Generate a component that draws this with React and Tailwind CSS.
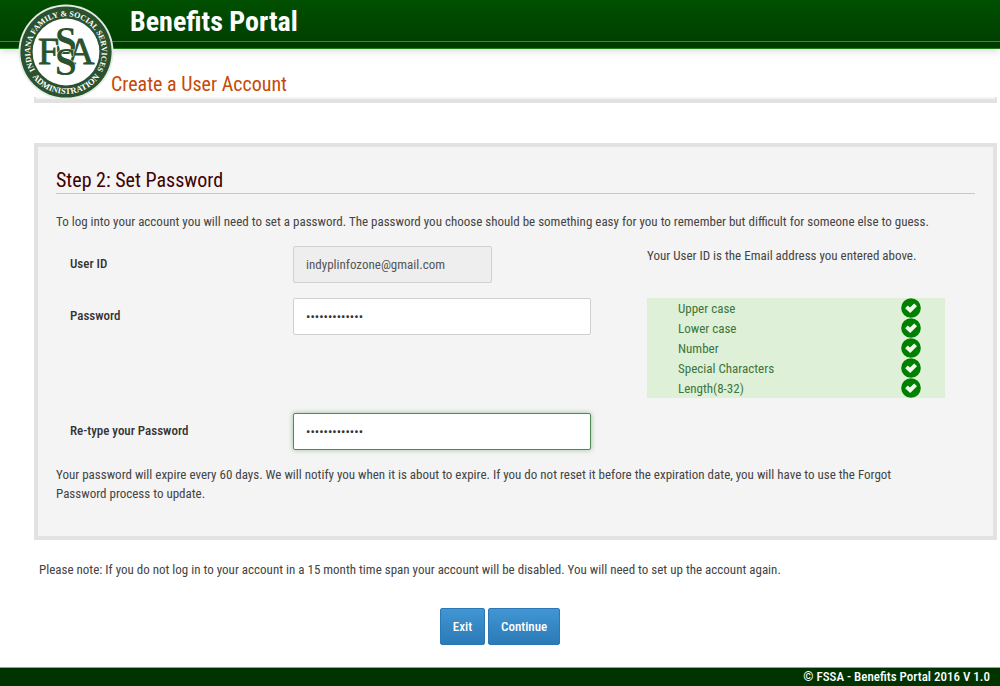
import React, { useId, useState } from "react";

const RULES = ["Upper case", "Lower case", "Number", "Special Characters", "Length(8-32)"];

function Seal() {
  return (
    <svg viewBox="0 0 96 96" className="absolute left-[18px] top-1 size-24" role="img" aria-label="Indiana Family and Social Services Administration">
      <defs>
        <path id="seal-upper" d="M 22.7 73.3 A 35.8 35.8 0 1 1 73.3 73.3" />
        <path id="seal-lower" d="M 9.2 64 A 42 42 0 0 0 86.8 64" />
      </defs>
      <circle cx="48" cy="48" r="47.5" fill="#e4ece4" />
      <circle cx="48" cy="48" r="45.6" fill="#2a522e" />
      <circle cx="48" cy="48" r="33.4" fill="#ffffff" />
      <g fontFamily="Liberation Serif, serif" fontWeight="700" fill="#ffffff">
        <text textAnchor="middle" fontSize="8">
          <textPath href="#seal-upper" startOffset="50%">INDIANA FAMILY &amp; SOCIAL SERVICES</textPath>
        </text>
        <text textAnchor="middle" fontSize="8.6">
          <textPath href="#seal-lower" startOffset="50%">ADMINISTRATION</textPath>
        </text>
      </g>
      <g fontFamily="Liberation Serif, serif" fill="#2a522e">
        <g stroke="#2a522e" strokeWidth="0.8" fontSize="38">
          <text x="20" y="60">F</text>
          <text x="49" y="60">A</text>
        </g>
        <g stroke="#ffffff" strokeWidth="0.8" paintOrder="stroke" fontSize="39" fontWeight="700">
          <text x="37" y="50">S</text>
          <text x="37" y="71">S</text>
        </g>
      </g>
    </svg>
  );
}

function CheckMark() {
  return (
    <svg viewBox="0 0 20 20" className="size-5 shrink-0" aria-hidden="true">
      <circle cx="10" cy="10" r="9.8" fill="#008000" />
      <path d="M4.2 10.2 L6.8 7.6 L9 9.4 L13.2 5.4 L16 8.2 L9.2 15 Z" fill="#f4faf0" />
    </svg>
  );
}

function Row({ id, label, children, aside }) {
  return (
    <div className="grid grid-cols-[237fr_354fr_328fr]">
      <label htmlFor={id} className="self-start pl-3.5 pt-2 font-medium text-[#333333]">{label}</label>
      <div className="pr-14">{children}</div>
      <div>{aside}</div>
    </div>
  );
}

const field = "block h-[37px] rounded-xs border px-3 outline-none";
const button = "h-[37px] rounded-xs border border-[#2b78b4] bg-linear-to-b from-[#4196d3] to-[#2a7ab6] px-3 font-medium text-white";

export default function App() {
  const id = useId();
  const [password, setPassword] = useState("Password12345");
  const [repeat, setRepeat] = useState("Password12345");
  return (
    <div className="flex min-h-screen flex-col bg-white font-['Roboto_Condensed','Roboto',sans-serif] text-[13px] leading-[19px] text-[#444444]">
      <header className="relative border-b border-[#1a7a1a] bg-[#003c00] shadow-[0_2px_8px_rgba(0,0,0,0.15)]">
        <div className="flex h-[42px] items-center border-b border-[#2f9130] bg-linear-to-b from-[#005000] to-[#004000] pl-[130px] pt-[3px]">
          <h1 className="text-[28px] font-bold leading-8 text-white">Benefits Portal</h1>
        </div>
        <div className="h-1.5" />
        <Seal />
      </header>

      <main className="flex-1">
        <div className="pl-[34px] pr-[3px]">
          <h2 className="pl-[77px] pt-[22px] text-xl leading-[26px] text-[#c64a06]">Create a User Account</h2>
          <div className="h-1.5 border-x-2 border-b-4 border-[#e2e2e2] bg-[#f4f4f4]" />

          <section className="mt-10 border-4 border-[#e2e2e2] bg-[#f4f4f4] px-[18px] pb-[33px] pt-5">
            <h3 className="border-b border-[#c8c8c8] text-xl leading-[26px] text-[#3f0000]">Step 2: Set Password</h3>
            <p className="pt-[18px]">
              To log into your account you will need to set a password. The password you choose should be something easy for you to remember but difficult for someone else to guess.
            </p>

            <form className="mt-[15px] flex flex-col gap-[15px]" onSubmit={(e) => e.preventDefault()}>
              <Row id={id + "user"} label="User ID" aside={<p>Your User ID is the Email address you entered above.</p>}>
                <input id={id + "user"} type="email" readOnly value="indyplinfozone@gmail.com" className={field + " w-2/3 border-[#d0d0d0] bg-[#eeeeee] text-[#555555]"} />
              </Row>
              <Row
                id={id + "pass"}
                label="Password"
                aside={
                  <ul className="mr-[30px] bg-[#dff0d8] pl-[31px] pr-6 text-[#3c763d]">
                    {RULES.map((rule) => (
                      <li key={rule} className="flex h-5 items-center justify-between">
                        {rule}
                        <CheckMark />
                      </li>
                    ))}
                  </ul>
                }
              >
                <input id={id + "pass"} type="password" value={password} onChange={(e) => setPassword(e.target.value)} className={field + " w-full border-[#d0d0d0] bg-white text-[#333333]"} />
              </Row>
              <Row id={id + "again"} label="Re-type your Password">
                <input id={id + "again"} type="password" value={repeat} onChange={(e) => setRepeat(e.target.value)} className={field + " w-full border-[#4f8a50] bg-white text-[#333333] shadow-[0_0_5px_rgba(60,150,60,0.5)]"} />
              </Row>
            </form>

            <p className="mt-[15px] pr-14">
              Your password will expire every 60 days. We will notify you when it is about to expire. If you do not reset it before the expiration date, you will have to use the Forgot Password process to update.
            </p>
          </section>

          <p className="mt-5 pl-[5px]">
            Please note: If you do not log in to your account in a 15 month time span your account will be disabled. You will need to set up the account again.
          </p>
        </div>

        <div className="flex justify-center gap-[3px] pb-[22px] pt-[29px]">
          <button type="button" className={button}>Exit</button>
          <button type="button" className={button}>Continue</button>
        </div>
      </main>

      <footer className="border-t border-[#8aa88a] bg-[#003300] pr-2.5 text-right font-medium leading-[18px] text-white">
        © FSSA - Benefits Portal 2016 V 1.0
      </footer>
    </div>
  );
}
